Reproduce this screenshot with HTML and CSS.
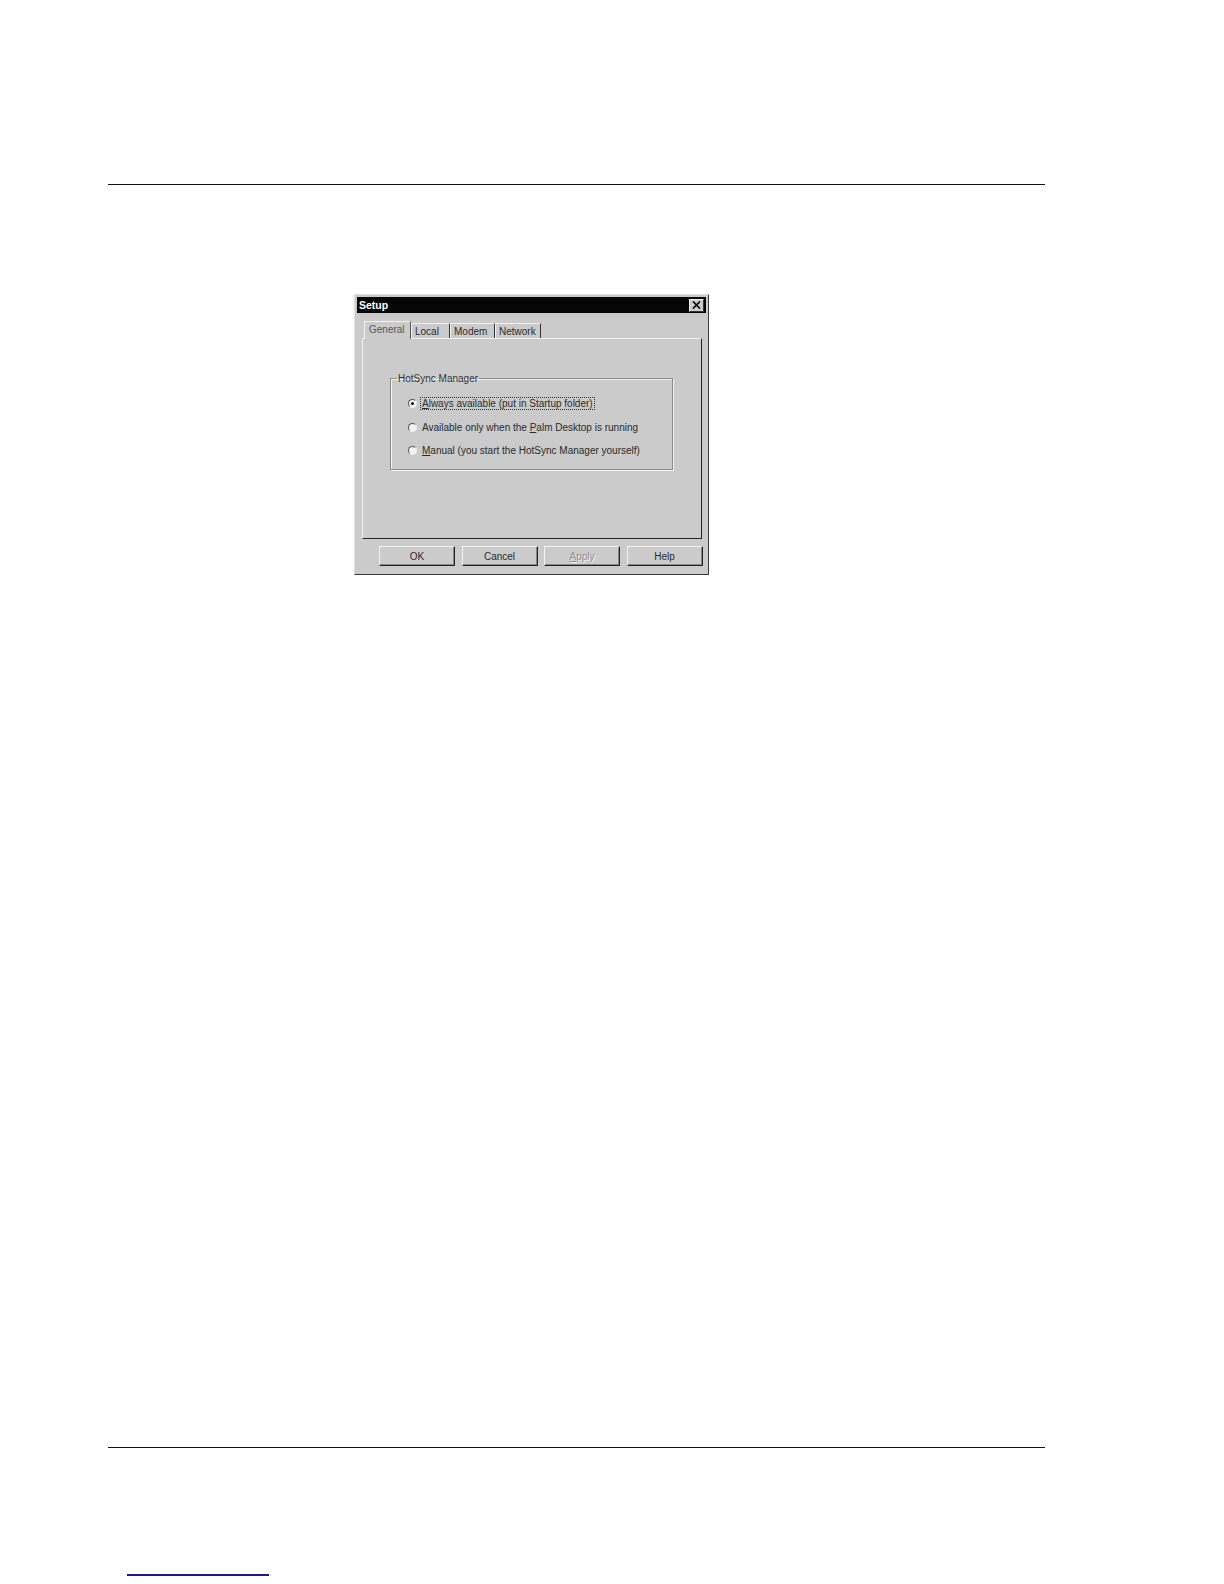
FILE: index.html
```html
<!DOCTYPE html>
<html>
<head>
<meta charset="utf-8">
<link rel="stylesheet" href="styles.css">
</head>
<body>
<div class="page">
  <div class="rule rule-top"></div>
  <div class="dialog">
    <div class="titlebar">
      <span class="title">Setup</span>
      <span class="close">
        <svg width="9" height="8" viewBox="0 0 9 8"><path d="M1 0.5 L8 7.5 M8 0.5 L1 7.5" stroke="#000" stroke-width="1.6"/></svg>
      </span>
    </div>
    <div class="tabs">
      <div class="tab active">General</div>
      <div class="tab w-local">Local</div>
      <div class="tab w-modem">Modem</div>
      <div class="tab w-net">Network</div>
    </div>
    <div class="panel">
      <fieldset class="group">
        <legend>HotSync Manager</legend>
        <div class="option">
          <span class="radio checked"></span>
          <span class="label focus"><u>A</u>lways available (put in Startup folder)</span>
        </div>
        <div class="option">
          <span class="radio"></span>
          <span class="label">Available only when the <u>P</u>alm Desktop is running</span>
        </div>
        <div class="option">
          <span class="radio"></span>
          <span class="label"><u>M</u>anual (you start the HotSync Manager yourself)</span>
        </div>
      </fieldset>
    </div>
    <div class="buttons">
      <div class="btn">OK</div>
      <div class="btn">Cancel</div>
      <div class="btn disabled"><u>A</u>pply</div>
      <div class="btn">Help</div>
    </div>
  </div>
  <div class="rule rule-bottom"></div>
  <div class="link-line"></div>
</div>
</body>
</html>
```
FILE: styles.css
```css
html, body {
  margin: 0;
  padding: 0;
  background: #fff;
}
.page {
  padding-top: 184px;
  font-family: "Liberation Sans", Arial, sans-serif;
}
.rule {
  margin-left: 108px;
  width: 937px;
  height: 0;
  border-top: 1px solid #111;
}
.rule-bottom {
  margin-top: 872px;
}
.link-line {
  margin-left: 127px;
  margin-top: 126px;
  width: 142px;
  height: 0;
  border-top: 2px solid #1a1a8c;
}
.dialog {
  margin-top: 109px;
  margin-left: 354px;
  width: 355px;
  height: 281px;
  box-sizing: border-box;
  background: #cbcbcb;
  border: 1px solid;
  border-color: #e0e0e0 #3a3a3a #3a3a3a #e0e0e0;
  padding: 2px;
  font-size: 10px;
  color: #1a1a1a;
}
.titlebar {
  height: 16px;
  background: #060606;
  display: flex;
  align-items: center;
  justify-content: space-between;
  padding: 0 2px 0 2px;
}
.title {
  color: #fff;
  font-weight: bold;
  font-size: 10.5px;
}
.close {
  width: 15px;
  height: 13px;
  background: #cbcbcb;
  border: 1px solid;
  border-color: #f0f0f0 #333 #333 #f0f0f0;
  box-sizing: border-box;
  display: flex;
  align-items: center;
  justify-content: center;
}
.tabs {
  display: flex;
  align-items: flex-end;
  margin-top: 8px;
  margin-left: 9px;
  height: 17px;
  position: relative;
  z-index: 2;
}
.tab {
  height: 15px;
  line-height: 15px;
  box-sizing: border-box;
  border-left: 1px solid #f2f2f2;
  border-right: 1px solid #333;
  border-top: 1px solid #f2f2f2;
  padding: 0 3px;
  color: #2a2a2a;
}
.tab.active {
  width: 47px;
  line-height: 16px;
  background: #cbcbcb;
  margin-left: -2px;
  padding: 0 4px 0 4px;
  border-right: 1px solid #555;
  margin-bottom: -1px;
  height: 18px;
  color: #555;
}
.w-local { width: 39px; }
.w-modem { width: 45px; }
.w-net { width: 46px; }
.panel {
  margin-left: 5px;
  width: 340px;
  height: 201px;
  box-sizing: border-box;
  border: 1px solid;
  border-color: #f2f2f2 #222 #222 #f2f2f2;
  padding: 34px 0 0 27px;
  position: relative;
  z-index: 1;
}
.group {
  margin: 0;
  width: 283px;
  height: 97px;
  box-sizing: border-box;
  border: 1px solid #8a8a8a;
  box-shadow: 1px 1px 0 #f2f2f2, inset 1px 1px 0 #f2f2f2;
  padding: 13px 0 0 17px;
}
.group legend {
  padding: 0 1px;
  margin-left: -11px;
  color: #333;
}
.option {
  display: flex;
  align-items: center;
  height: 13px;
  margin-bottom: 10.5px;
}
.radio {
  width: 9px;
  height: 9px;
  border-radius: 50%;
  box-sizing: border-box;
  background: #f4f4f4;
  border: 1px solid;
  border-color: #555 #eee #eee #555;
  position: relative;
  flex: none;
}
.radio.checked::after {
  content: "";
  position: absolute;
  left: 2px;
  top: 2px;
  width: 3px;
  height: 3px;
  border-radius: 50%;
  background: #111;
}
.label {
  margin-left: 3px;
  padding: 0 1px;
  color: #2a2a2a;
  line-height: 11px;
  border: 1px solid transparent;
}
.label.focus {
  border: 1px dotted #333;
}
.buttons {
  display: flex;
  gap: 6.5px;
  margin-top: 7px;
  margin-left: 22px;
}
.btn {
  width: 76px;
  height: 20px;
  box-sizing: border-box;
  border: 1px solid;
  border-color: #f4f4f4 #222 #222 #f4f4f4;
  box-shadow: inset -1px -1px 0 #888;
  display: flex;
  align-items: center;
  justify-content: center;
  color: #2a2a2a;
}
.btn.disabled {
  color: #8e8e8e;
  text-shadow: 1px 1px 0 #f2f2f2;
}
```
